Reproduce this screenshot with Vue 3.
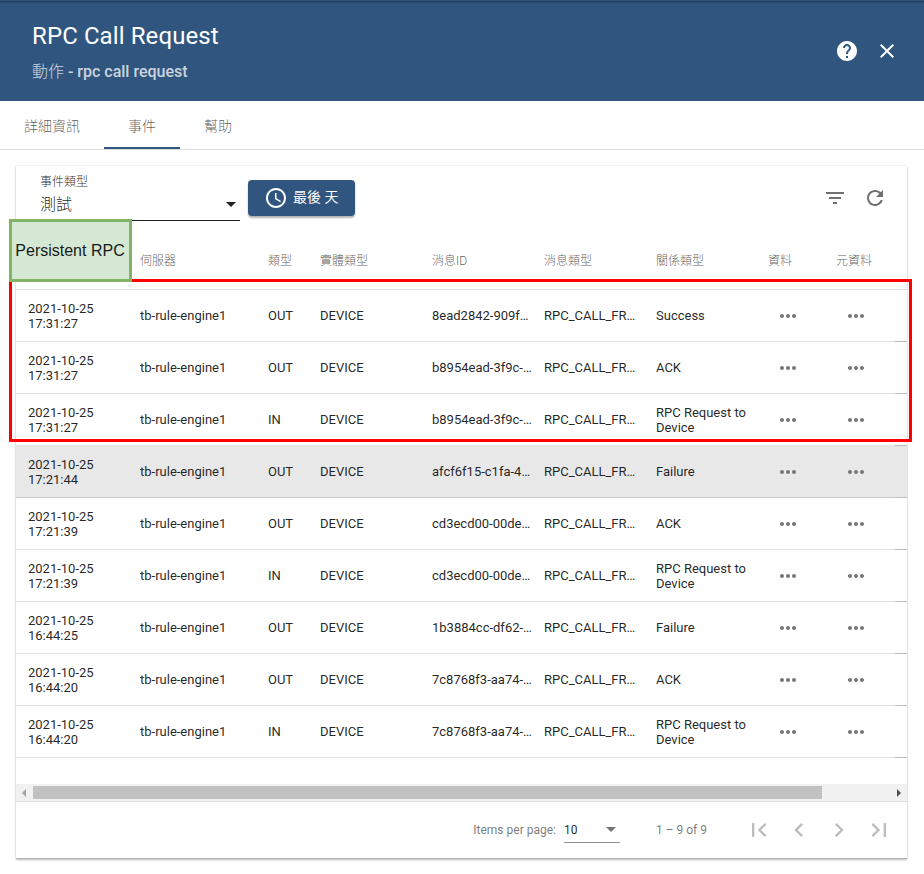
<script setup>
const columns = ['', '伺服器', '類型', '實體類型', '消息ID', '消息類型', '關係類型', '資料', '元資料']

const event = (time, type, id, relation, active = false) => ({ time, type, id, relation, active })

const rows = [
  event('17:31:27', 'OUT', '8ead2842-909f…', 'Success'),
  event('17:31:27', 'OUT', 'b8954ead-3f9c-…', 'ACK'),
  event('17:31:27', 'IN', 'b8954ead-3f9c-…', 'RPC Request to Device'),
  event('17:21:44', 'OUT', 'afcf6f15-c1fa-4…', 'Failure', true),
  event('17:21:39', 'OUT', 'cd3ecd00-00de…', 'ACK'),
  event('17:21:39', 'IN', 'cd3ecd00-00de…', 'RPC Request to Device'),
  event('16:44:25', 'OUT', '1b3884cc-df62-…', 'Failure'),
  event('16:44:20', 'OUT', '7c8768f3-aa74-…', 'ACK'),
  event('16:44:20', 'IN', '7c8768f3-aa74-…', 'RPC Request to Device'),
]

const dots = 'M6 10c-1.1 0-2 .9-2 2s.9 2 2 2 2-.9 2-2-.9-2-2-2zm12 0c-1.1 0-2 .9-2 2s.9 2 2 2 2-.9 2-2-.9-2-2-2zm-6 0c-1.1 0-2 .9-2 2s.9 2 2 2 2-.9 2-2-.9-2-2-2z'

const pagerIcons = [
  'M18.41 16.59L13.82 12l4.59-4.59L17 6l-6 6 6 6zM6 6h2v12H6z',
  'M15.41 7.41L14 6l-6 6 6 6 1.41-1.41L10.83 12z',
  'M10 6L8.59 7.41 13.17 12l-4.58 4.59L10 18l6-6z',
  'M5.59 7.41L10.18 12l-4.59 4.59L7 18l6-6-6-6zM16 6h2v12h-2z',
]
</script>

<template>
  <div class="page">
    <header class="header">
      <div class="titles">
        <h1>RPC Call Request</h1>
        <p><span class="light">動作 </span>- rpc call request</p>
      </div>
      <div class="header-actions">
        <svg viewBox="0 0 24 24"><path d="M12 2C6.48 2 2 6.48 2 12s4.48 10 10 10 10-4.48 10-10S17.52 2 12 2zm1 17h-2v-2h2v2zm2.07-7.75l-.9.92C13.45 12.9 13 13.5 13 15h-2v-.5c0-1.1.45-2.1 1.17-2.83l1.24-1.26c.37-.36.59-.86.59-1.41 0-1.1-.9-2-2-2s-2 .9-2 2H8c0-2.21 1.79-4 4-4s4 1.79 4 4c0 .88-.36 1.68-.93 2.25z" /></svg>
        <svg viewBox="0 0 24 24"><path d="M19 6.41L17.59 5 12 10.59 6.41 5 5 6.41 10.59 12 5 17.59 6.41 19 12 13.41 17.59 19 19 17.59 13.41 12z" /></svg>
      </div>
    </header>

    <nav class="tabs">
      <div class="tab">詳細資訊</div>
      <div class="tab active">事件</div>
      <div class="tab">幫助</div>
    </nav>

    <main class="card">
      <div class="toolbar">
        <div class="select">
          <span class="select-label">事件類型</span>
          <div class="select-value"><span>測試</span><i class="caret"></i></div>
        </div>
        <button class="time-button">
          <svg viewBox="0 0 24 24"><path d="M11.99 2C6.47 2 2 6.48 2 12s4.47 10 9.99 10C17.52 22 22 17.52 22 12S17.52 2 11.99 2zM12 20c-4.42 0-8-3.58-8-8s3.58-8 8-8 8 3.58 8 8-3.58 8-8 8zm.5-13H11v6l5.25 3.15.75-1.23-4.5-2.67z" /></svg>
          <span>最後 天</span>
        </button>
        <div class="tools">
          <svg viewBox="0 0 24 24"><path d="M10 18h4v-2h-4v2zM3 6v2h18V6H3zm3 7h12v-2H6v2z" /></svg>
          <svg viewBox="0 0 24 24"><path d="M17.65 6.35C16.2 4.9 14.21 4 12 4c-4.42 0-7.99 3.58-7.99 8s3.57 8 7.99 8c3.73 0 6.84-2.55 7.73-6h-2.08c-.82 2.33-3.04 4-5.65 4-3.31 0-6-2.69-6-6s2.69-6 6-6c1.66 0 3.14.69 4.22 1.78L13 11h7V4l-2.35 2.35z" /></svg>
        </div>
      </div>

      <div class="table">
        <div class="row head">
          <div v-for="(c, i) in columns" :key="i" class="cell">{{ c }}</div>
        </div>
        <div v-for="(r, i) in rows" :key="i" class="row" :class="{ selected: r.active }">
          <div class="cell">2021-10-25 {{ r.time }}</div>
          <div class="cell single">tb-rule-engine1</div>
          <div class="cell single">{{ r.type }}</div>
          <div class="cell single">DEVICE</div>
          <div class="cell single">{{ r.id }}</div>
          <div class="cell single">RPC_CALL_FR…</div>
          <div class="cell" :class="{ single: r.relation.length < 10 }">{{ r.relation }}</div>
          <div class="cell more"><svg viewBox="0 0 24 24"><path :d="dots" /></svg></div>
          <div class="cell more"><svg viewBox="0 0 24 24"><path :d="dots" /></svg></div>
          <div class="edge"></div>
        </div>
      </div>

      <div class="scrollbar">
        <i class="arrow left"></i>
        <div class="thumb"></div>
        <i class="arrow right"></i>
      </div>

      <footer class="paginator">
        <span class="per-page">Items per page:</span>
        <div class="page-size"><span>10</span><i class="caret"></i></div>
        <span class="range">1 – 9 of 9</span>
        <div class="pager">
          <svg v-for="(d, i) in pagerIcons" :key="i" viewBox="0 0 24 24"><path :d="d" /></svg>
        </div>
      </footer>
    </main>

    <div class="highlight"></div>
    <div class="note">Persistent RPC</div>
  </div>
</template>

<style>
body {
  background: #fff;
}
</style>

<style scoped>
* {
  box-sizing: border-box;
}
.page {
  position: relative;
  width: 924px;
  height: 874px;
  overflow: hidden;
  background: #fff;
  font-family: Roboto, 'Noto Sans CJK TC', sans-serif;
  color: rgba(0, 0, 0, 0.87);
}
svg {
  display: block;
  width: 24px;
  height: 24px;
  fill: currentColor;
}
.header {
  height: 101px;
  display: flex;
  justify-content: space-between;
  background: linear-gradient(#305680 0 1px, #1e3d5f 1px 2px, #2a4d75 2px 3px, #305680 3px);
  color: #fff;
}
.titles {
  padding: 20px 0 0 32px;
}
h1 {
  margin: 0;
  font-size: 24px;
  line-height: 32px;
  font-weight: 400;
  letter-spacing: 0.1px;
}
p {
  margin: 8px 0 0;
  font-size: 16px;
  line-height: 24px;
  font-weight: 500;
  color: rgba(255, 255, 255, 0.75);
}
.light {
  font-weight: 300;
}
.header-actions {
  display: flex;
  gap: 16px;
  padding: 39px 25px 0 0;
}
.tabs {
  height: 49px;
  display: flex;
  border-bottom: 1px solid #dcdcdc;
  font-size: 14px;
  font-weight: 300;
  color: rgba(0, 0, 0, 0.65);
}
.tab {
  height: 48px;
  padding: 0 24px;
  line-height: 51px;
}
.tab.active {
  border-bottom: 2px solid #305680;
}
.card {
  width: 891px;
  height: 693px;
  margin: 16px 0 0 16px;
  display: flex;
  flex-direction: column;
  box-shadow: 0 1px 2px rgba(0, 0, 0, 0.24), 0 0 2px rgba(0, 0, 0, 0.1);
  border-bottom: 1px solid #b0b0b0;
}
.toolbar {
  height: 64px;
  display: flex;
  padding-left: 24px;
}
.select {
  width: 200px;
  height: 55px;
  border-bottom: 1px solid #1c1c1c;
  padding-top: 7px;
}
.select-label {
  display: block;
  font-size: 12px;
  line-height: 18px;
  font-weight: 300;
}
.select-value {
  display: flex;
  justify-content: space-between;
  align-items: center;
  font-size: 16px;
  line-height: 27px;
  font-weight: 300;
  padding-right: 4px;
}
.caret {
  border: 5px solid transparent;
  border-top-color: currentColor;
  border-bottom: 0;
}
.time-button {
  display: flex;
  align-items: center;
  gap: 5px;
  width: 107px;
  height: 36px;
  margin: 14px 0 0 8px;
  padding: 0 0 0 16px;
  border: 0;
  border-radius: 4px;
  background: #305680;
  color: #fff;
  font: 400 14px Roboto, 'Noto Sans CJK TC', sans-serif;
  box-shadow: 0 2px 2px rgba(0, 0, 0, 0.3);
  white-space: nowrap;
}
.time-button span {
  padding-bottom: 4px;
}
.tools {
  display: flex;
  gap: 16px;
  margin-left: auto;
  padding: 20px 20px 0 0;
  color: #707070;
}
.table {
  height: 554px;
}
.row {
  display: grid;
  grid-template-columns: 112px 128px 52px 112px 112px 112px 112px 68px 59px 12px;
  align-items: center;
  height: 52px;
  padding-left: 12px;
  border-bottom: 1px solid #e0e0e0;
  font-size: 13px;
  line-height: 15px;
}
.row.head {
  height: 60px;
  padding-top: 4px;
  font-size: 12px;
  font-weight: 300;
  color: rgba(0, 0, 0, 0.65);
}
.row.selected {
  background: #e8e8e8;
  border-bottom-color: #cacaca;
}
.cell {
  padding-right: 12px;
  white-space: nowrap;
}
.cell:first-child,
.cell:nth-child(7) {
  white-space: normal;
}
.cell:first-child {
  padding-right: 36px;
}
.cell.single {
  padding-bottom: 2px;
}
.cell.more {
  padding: 0 0 0 8px;
  color: #757575;
}
.edge {
  height: 52px;
  border-bottom: 1px solid #bdbdbd;
}
.scrollbar {
  display: flex;
  align-items: center;
  height: 17px;
  background: #f1f1f1;
}
.thumb {
  width: 789px;
  height: 13px;
  margin: 0 auto 0 5px;
  background: #c1c1c1;
}
.arrow {
  border: 4px solid transparent;
}
.arrow.left {
  margin-left: 6px;
  border-left: 0;
  border-right-color: #a3a3a3;
  margin-right: 2px;
}
.arrow.right {
  margin-right: 6px;
  border-right: 0;
  border-left-color: #505050;
}
.paginator {
  display: flex;
  align-items: center;
  justify-content: flex-end;
  height: 56px;
  border-top: 1px solid #e0e0e0;
  font-size: 12px;
  color: rgba(0, 0, 0, 0.54);
}
.page-size {
  display: flex;
  justify-content: space-between;
  align-items: center;
  width: 56px;
  height: 26px;
  margin: 0 36px 0 8px;
  padding-right: 4px;
  border-bottom: 1px solid #8c8c8c;
}
.page-size span {
  padding-top: 1px;
  color: rgba(0, 0, 0, 0.87);
}
.pager {
  display: flex;
  gap: 12px;
  margin-left: 38px;
  padding-right: 14px;
  color: #bdbdbd;
}
.pager svg {
  width: 28px;
  height: 28px;
}
.highlight {
  position: absolute;
  left: 9px;
  top: 279px;
  width: 903px;
  height: 163px;
  border: 3px solid #f00;
}
.note {
  position: absolute;
  left: 9px;
  top: 219px;
  width: 123px;
  height: 63px;
  border: 3px solid #82b366;
  background: #d5e8d4;
  color: #1a1a1a;
  font: 16px/57px 'Liberation Sans', sans-serif;
  text-align: center;
  text-indent: -1px;
  white-space: nowrap;
}
</style>
